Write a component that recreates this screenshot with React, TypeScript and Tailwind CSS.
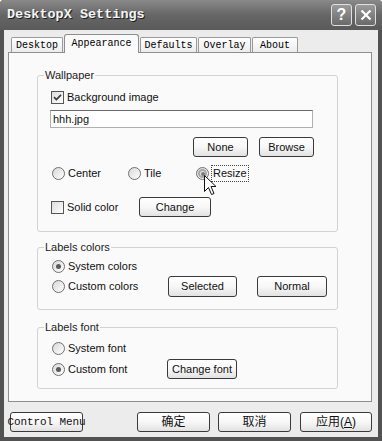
import React from "react";

const SANS = "font-['Liberation_Sans',Arial,sans-serif]";
const MONO = "font-['Liberation_Mono','Courier_New',monospace]";
const CJK = "font-['Liberation_Sans','Noto_Sans_CJK_SC',sans-serif]";

function Radio({ checked = false, hot = false }: { checked?: boolean; hot?: boolean }) {
  return (
    <span className="flex h-[13px] w-[13px] shrink-0 items-center justify-center rounded-full border border-[#707070] bg-linear-to-br from-[#d8d8d8] to-white">
      {hot ? (
        <span className="flex h-[9px] w-[9px] items-center justify-center rounded-full border-[2px] border-[#a8a8a8]">
          <span className="h-[4px] w-[4px] rounded-full bg-[#7a7a7a]" />
        </span>
      ) : checked ? (
        <span className="h-[5px] w-[5px] rounded-full bg-[#5a5a5a]" />
      ) : null}
    </span>
  );
}

function Check({ checked = false }: { checked?: boolean }) {
  return (
    <span className="flex h-[13px] w-[13px] shrink-0 items-center justify-center border border-[#555] bg-linear-to-br from-[#dcdcdc] to-white">
      {checked && (
        <svg width="9" height="9" viewBox="0 0 9 9">
          <path d="M1 4.2 L3.4 6.6 L8 1.8" fill="none" stroke="#3a3a3a" strokeWidth="1.7" />
        </svg>
      )}
    </span>
  );
}

function Btn({ children, w, h = 20, cls = "" }: { children: React.ReactNode; w: number; h?: number; cls?: string }) {
  return (
    <div
      style={{ width: w, height: h }}
      className={`flex shrink-0 items-center justify-center whitespace-nowrap rounded-[3px] border border-[#3a3a3a] bg-linear-to-b from-white via-[#f7f7f7] to-[#e2e2e2] text-[11px] text-[#111] ${cls}`}
    >
      {children}
    </div>
  );
}

function Tab({ label, w, selected = false }: { label: string; w: number; selected?: boolean }) {
  return (
    <div
      style={{ width: w }}
      className={
        selected
          ? `relative z-10 mb-[-1px] flex h-[19px] items-center justify-center rounded-t-[3px] border-x border-t border-[#8e8e8e] bg-[#fafafa] pb-[2px] text-[10px] text-black ${MONO}`
          : `flex h-[15px] items-center justify-center rounded-t-[2px] border-x border-t border-[#9a9a9a] bg-linear-to-b from-white to-[#ececec] pt-[1px] text-[10px] text-black ${MONO}`
      }
    >
      {label}
    </div>
  );
}

export default function App() {
  return (
    <div className={`relative flex h-[441px] w-[382px] flex-col overflow-hidden rounded-t-[4px] bg-[#525252] ${SANS}`}>
      {/* Title bar */}
      <div className="flex h-[30px] shrink-0 items-center bg-linear-to-b from-[#8a8a8a] via-[#666] to-[#5a5a5a] pl-[7px] pr-[6px]">
        <span className={`mt-[1px] text-[13.5px] font-bold text-[#f4f4f4] [text-shadow:1px_1px_0_#1e1e1e] ${MONO}`}>
          DesktopX Settings
        </span>
        <div className="ml-auto flex gap-[3px]">
          <div className="flex h-[22px] w-[21px] items-center justify-center rounded-[3px] border border-[#e0e0e0] bg-linear-to-b from-[#9a9a9a] to-[#6a6a6a] text-[16px] font-bold text-white">
            ?
          </div>
          <div className="flex h-[22px] w-[21px] items-center justify-center rounded-[3px] border border-[#e0e0e0] bg-linear-to-b from-[#9a9a9a] to-[#6a6a6a]">
            <svg width="12" height="12" viewBox="0 0 12 12">
              <path d="M1.5 1.5 L10.5 10.5 M10.5 1.5 L1.5 10.5" stroke="white" strokeWidth="2.2" />
            </svg>
          </div>
        </div>
      </div>

      {/* Client */}
      <div className="mx-[4px] mb-[4px] flex flex-1 flex-col bg-[#ececec]">
        {/* Tabs */}
        <div className="flex h-[22px] shrink-0 items-end gap-[1px] pl-[7px]">
          <Tab label="Desktop" w={52} />
          <Tab label="Appearance" w={75} selected />
          <Tab label="Defaults" w={57} />
          <Tab label="Overlay" w={53} />
          <Tab label="About" w={46} />
        </div>

        {/* Panel */}
        <div className="ml-[4px] flex h-[350px] w-[364px] shrink-0 flex-col border border-[#8e8e8e] bg-[#fafafa] pl-[28px] text-[11px] text-[#111]">
          {/* Wallpaper */}
          <fieldset className="mt-[16px] h-[163px] w-[301px] rounded-[3px] border border-[#d2d2d2]">
            <legend className="ml-[6px] px-[1px] text-[11px] leading-[13px] text-[#222]">Wallpaper</legend>
            <div className="flex flex-col">
              <div className="ml-[13px] mt-[9px] flex h-[13px] items-center gap-[3px]">
                <Check checked />
                <span>Background image</span>
              </div>
              <div className="ml-[12px] mt-[6px] flex h-[18px] w-[263px] items-center border border-[#b0b0b0] border-t-[#6a6a6a] bg-white pl-[2px] text-[11px]">
                hhh.jpg
              </div>
              <div className="ml-[155px] mt-[9px] flex gap-[11px]">
                <Btn w={55}>None</Btn>
                <Btn w={55}>Browse</Btn>
              </div>
              <div className="ml-[14px] mt-[10px] flex h-[13px] items-center">
                <div className="flex w-[76px] items-center gap-[3px]">
                  <Radio />
                  <span>Center</span>
                </div>
                <div className="flex w-[68px] items-center gap-[3px]">
                  <Radio />
                  <span>Tile</span>
                </div>
                <div className="flex items-center gap-[2px]">
                  <Radio hot />
                  <span className="border border-dotted border-[#444] px-[1px] leading-[15px]">Resize</span>
                </div>
              </div>
              <div className="ml-[13px] mt-[17px] flex h-[20px] items-center">
                <div className="flex w-[88px] items-center gap-[3px]">
                  <Check />
                  <span>Solid color</span>
                </div>
                <Btn w={72}>Change</Btn>
              </div>
            </div>
          </fieldset>

          {/* Labels colors */}
          <fieldset className="mt-[9px] h-[69px] w-[301px] rounded-[3px] border border-[#d2d2d2]">
            <legend className="ml-[6px] px-[1px] text-[11px] leading-[13px] text-[#222]">Labels colors</legend>
            <div className="flex flex-col">
              <div className="ml-[14px] mt-[6px] flex h-[13px] items-center gap-[3px]">
                <Radio checked />
                <span>System colors</span>
              </div>
              <div className="ml-[14px] mt-[3px] flex h-[21px] items-center">
                <div className="flex w-[116px] items-center gap-[3px]">
                  <Radio />
                  <span>Custom colors</span>
                </div>
                <Btn w={69} h={21}>Selected</Btn>
                <div className="w-[20px]" />
                <Btn w={70} h={21}>Normal</Btn>
              </div>
            </div>
          </fieldset>

          {/* Labels font */}
          <fieldset className="mt-[11px] h-[68px] w-[301px] rounded-[3px] border border-[#d2d2d2]">
            <legend className="ml-[6px] px-[1px] text-[11px] leading-[13px] text-[#222]">Labels font</legend>
            <div className="flex flex-col">
              <div className="ml-[14px] mt-[8px] flex h-[13px] items-center gap-[3px]">
                <Radio />
                <span>System font</span>
              </div>
              <div className="ml-[14px] mt-[4px] flex h-[20px] items-center">
                <div className="flex w-[115px] items-center gap-[3px]">
                  <Radio checked />
                  <span>Custom font</span>
                </div>
                <Btn w={70}>Change font</Btn>
              </div>
            </div>
          </fieldset>
        </div>

        {/* Bottom buttons */}
        <div className="ml-[6px] mt-[10px] flex h-[20px] shrink-0">
          <Btn w={73} cls={`text-[9.6px] tracking-[-0.1px] ${MONO}`}>Control Menu</Btn>
          <div className="w-[54px]" />
          <Btn w={73} cls={`text-[12px] ${CJK}`}>确定</Btn>
          <div className="w-[8px]" />
          <Btn w={73} cls={`text-[12px] ${CJK}`}>取消</Btn>
          <div className="w-[9px]" />
          <Btn w={72} cls={`text-[12px] ${CJK}`}>
            应用(<span className="underline">A</span>)
          </Btn>
        </div>
      </div>

      {/* Mouse cursor */}
      <svg className="absolute left-[204px] top-[175px]" width="13" height="21" viewBox="0 0 13 21">
        <path d="M0.5 0.5 L0.5 16.5 L4.5 12.5 L7.5 19.5 L10 18.5 L7 11.5 L12 11.5 Z" fill="white" stroke="#111" strokeWidth="1" />
      </svg>
    </div>
  );
}
